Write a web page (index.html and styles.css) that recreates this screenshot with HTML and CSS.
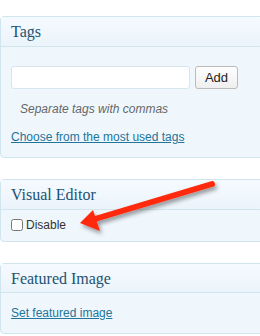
FILE: index.html
```html
<!DOCTYPE html>
<html>
  <head>
    <link rel="stylesheet" href="styles.css">
  </head>
  <body>
    <div class="postbox tags-box">
      <h3 class="hndle">Tags</h3>
      <div class="inside">
        <div class="tag-row">
          <input type="text" class="tag-input">
          <button class="button">Add</button>
        </div>
        <p class="howto">Separate tags with commas</p>
        <a href="#" class="link">Choose from the most used tags</a>
      </div>
    </div>

    <div class="postbox editor-box">
      <h3 class="hndle">Visual Editor</h3>
      <div class="inside">
        <label class="check">
          <input type="checkbox">
          <span>Disable</span>
        </label>
      </div>
    </div>

    <div class="postbox image-box">
      <h3 class="hndle">Featured Image</h3>
      <div class="inside">
        <a href="#" class="link">Set featured image</a>
      </div>
    </div>

    <svg class="arrow" width="260" height="336" viewBox="0 0 260 336">
      <defs>
        <filter id="shadow" x="-20%" y="-50%" width="140%" height="200%">
          <feDropShadow dx="2" dy="3" stdDeviation="2" flood-color="#000" flood-opacity="0.4"/>
        </filter>
      </defs>
      <g filter="url(#shadow)">
        <line x1="212" y1="184" x2="95" y2="219" stroke="#ff2a0c" stroke-width="6" stroke-linecap="round"/>
        <polygon points="80,223 93,210 100,231" fill="#ff2a0c"/>
      </g>
    </svg>
  </body>
</html>
```

FILE: styles.css
```css
body {
  margin: 0;
  background: #fff;
  font-family: "Liberation Sans", sans-serif;
  font-size: 12px;
  line-height: 16px;
  overflow: hidden;
}
.postbox {
  box-sizing: border-box;
  margin: 0 -6px 0 0;
  border: 1px solid #d1e5ee;
  border-radius: 4px;
  background: #eff7fd;
}
.tags-box {
  margin-top: 16px;
  height: 142px;
}
.editor-box {
  margin-top: 21px;
  height: 63px;
}
.image-box {
  margin-top: 21px;
  height: 71px;
}
.hndle {
  margin: 0;
  height: 30px;
  box-sizing: border-box;
  padding: 5px 10px 0;
  border-bottom: 1px solid #d1e5ee;
  background: linear-gradient(#f5faff, #ebf4fb);
  font-family: "Liberation Serif", serif;
  font-weight: normal;
  font-size: 16px;
  line-height: 20px;
  color: #1d5271;
}
.image-box .hndle {
  height: 29px;
}
.inside {
  padding: 0 10px;
}
.tags-box .inside {
  padding-top: 19px;
}
.tag-row {
  display: flex;
  gap: 5px;
}
.tag-input {
  width: 179px;
  height: 23px;
  box-sizing: border-box;
  margin: 0;
  border: 1px solid #d5e6ef;
  border-radius: 3px;
  background: #fff;
}
.button {
  width: 43px;
  height: 23px;
  box-sizing: border-box;
  margin: 0;
  padding: 0;
  border: 1px solid #bbb;
  border-radius: 3px;
  background: linear-gradient(#fefefe, #efefef);
  font-family: "Liberation Sans", sans-serif;
  font-size: 13px;
  color: #222;
}
.howto {
  margin: 12px 0 0 9px;
  font-style: italic;
  color: #666;
}
.link {
  display: inline-block;
  margin-top: 12px;
  color: #21759b;
}
.editor-box .inside {
  padding-top: 7px;
}
.check {
  display: flex;
  align-items: center;
  gap: 3px;
  color: #333;
}
.check input {
  margin: 0;
  width: 12px;
  height: 12px;
}
.image-box .inside {
  padding-top: 12px;
}
.image-box .link {
  margin-top: 0;
}
.arrow {
  position: absolute;
  left: 0;
  top: 0;
  pointer-events: none;
}
```
